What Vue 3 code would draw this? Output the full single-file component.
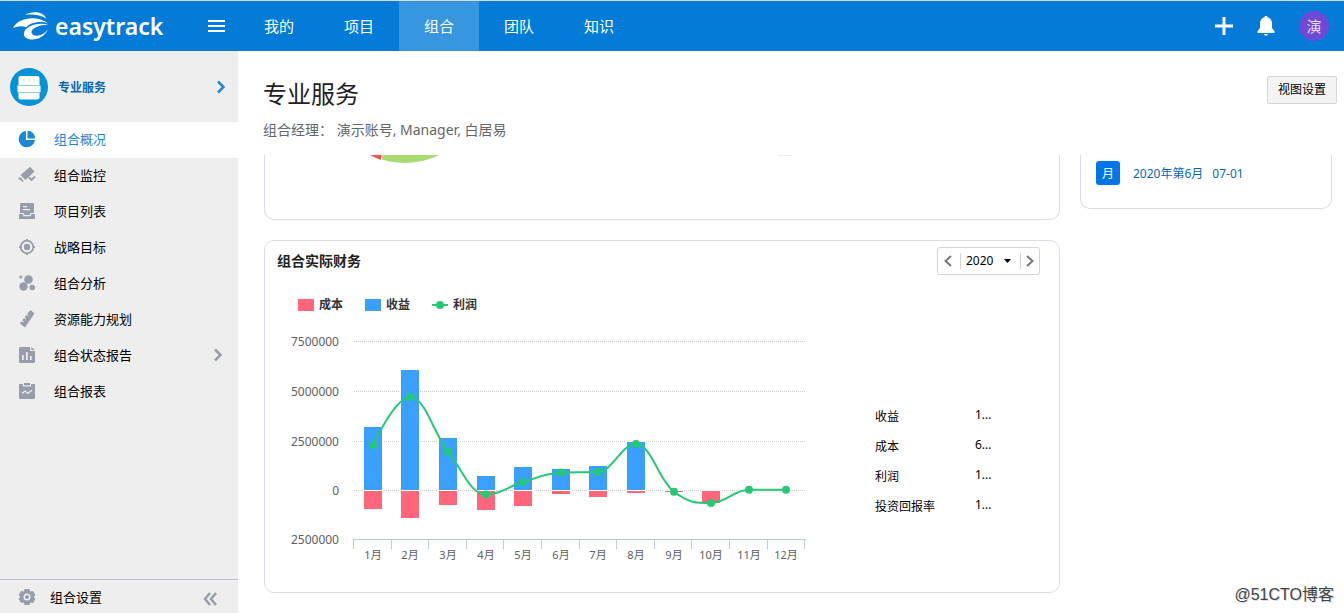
<script setup>
import { ref } from 'vue'

const tabs = ['我的', '项目', '组合', '团队', '知识']
const activeTab = ref('组合')

const menu = [
  { label: '组合概况', icon: 'pie' },
  { label: '组合监控', icon: 'camera' },
  { label: '项目列表', icon: 'inbox' },
  { label: '战略目标', icon: 'target' },
  { label: '组合分析', icon: 'bubbles' },
  { label: '资源能力规划', icon: 'ruler' },
  { label: '组合状态报告', icon: 'report', more: true },
  { label: '组合报表', icon: 'clipboard' },
]
const activeMenu = ref('组合概况')
const year = ref('2020')

const summary = [
  { name: '收益', value: '1...' },
  { name: '成本', value: '6...' },
  { name: '利润', value: '1...' },
  { name: '投资回报率', value: '1...' },
]

// Monthly amounts in units of 10,000
const income = [318, 606, 263, 71, 116, 106, 121, 242, 0, 0, 0, 0]
const cost = [91, 136, 71, 96, 76, 15, 30, 10, 5, 61, 0, 0]
const profit = [227, 470, 194, -23, 40, 88, 91, 232, -9, -66, 1, 1]

const left = 74
const step = 37.6
const zero = 160
const scale = 0.198
const centers = income.map((_, i) => Math.round(left + step * (i + 0.5)))
const ticks = Array.from({ length: 13 }, (_, i) => Math.floor(left - 0.5 + step * i) + 0.5)
const grid = [
  { y: 11, label: '7500000' },
  { y: 61, label: '5000000' },
  { y: 111, label: '2500000' },
  { y: 160, label: '0' },
  { y: 209, label: '2500000' },
]
const points = profit.map((v, i) => ({ x: centers[i], y: zero - v * scale }))

function spline(pts) {
  let d = `M${pts[0].x} ${pts[0].y}`
  let prevX = pts[0].x
  let prevY = pts[0].y
  for (let i = 1; i < pts.length; i++) {
    const p = pts[i]
    let lx = p.x
    let ly = p.y
    let rx = p.x
    let ry = p.y
    if (i < pts.length - 1) {
      const a = pts[i - 1]
      const b = pts[i + 1]
      lx = (1.5 * p.x + a.x) / 2.5
      ly = (1.5 * p.y + a.y) / 2.5
      rx = (1.5 * p.x + b.x) / 2.5
      ry = (1.5 * p.y + b.y) / 2.5
      const fix = ((ry - ly) * (rx - p.x)) / (rx - lx) + p.y - ry
      ly += fix
      ry += fix
      if (ly > Math.max(a.y, p.y)) {
        ly = Math.max(a.y, p.y)
        ry = 2 * p.y - ly
      } else if (ly < Math.min(a.y, p.y)) {
        ly = Math.min(a.y, p.y)
        ry = 2 * p.y - ly
      }
      if (ry > Math.max(b.y, p.y)) {
        ry = Math.max(b.y, p.y)
        ly = 2 * p.y - ry
      } else if (ry < Math.min(b.y, p.y)) {
        ry = Math.min(b.y, p.y)
        ly = 2 * p.y - ry
      }
    }
    d += ` C${prevX} ${prevY} ${lx} ${ly} ${p.x} ${p.y}`
    prevX = rx
    prevY = ry
  }
  return d
}
const profitPath = spline(points)
</script>

<template>
  <div class="app">
    <header class="topbar">
      <a class="logo" href="#" aria-label="easytrack">
        <svg viewBox="36 32 116 92" width="38" height="30" fill="#fff">
          <path d="M76 44C94 31 132 32 141 55C124 44 100 41 76 44Z" />
          <path d="M39 84C56 50 112 44 148 70C116 60 90 70 79 82C66 76 54 79 39 84Z" />
          <path d="M147 74C112 64 73 80 72 103C74 126 128 128 146 89C132 108 104 114 96 100C92 86 118 74 147 74Z" />
        </svg>
        <span>easytrack</span>
      </a>
      <button class="burger" aria-label="菜单"><i></i><i></i><i></i></button>
      <nav class="tabs">
        <a v-for="t in tabs" :key="t" href="#" :class="{ on: t === activeTab }" @click.prevent="activeTab = t">{{ t }}</a>
      </nav>
      <div class="tools">
        <button aria-label="新建">
          <svg width="18" height="18" viewBox="0 0 18 18" fill="#fff"><path d="M7.500 0h3v7.500H18v3h-7.500V18h-3v-7.500H0v-3h7.500z" /></svg>
        </button>
        <button aria-label="通知">
          <svg width="18" height="20" viewBox="0 0 18 20" fill="#fff"><path d="M9 0c1 0 1.500.6 1.500 1.300C13.500 2 15 4.500 15 7.500V12l2.500 3.200V17H.5v-1.800L3 12V7.500C3 4.500 4.500 2 7.500 1.300 7.500.6 8 0 9 0zM6.500 18h5L9 20z" /></svg>
        </button>
        <button class="avatar">演</button>
      </div>
    </header>

    <div class="body">
      <aside class="side">
        <a class="portfolio" href="#">
          <svg width="38" height="38" viewBox="0 0 38 38">
            <circle cx="19" cy="19" r="19" fill="#0492d8" />
            <rect x="8.500" y="8" width="21" height="23.500" rx="2" fill="#fff" />
            <rect x="7.500" y="17.500" width="23" height="7" rx="1" fill="#fff" stroke="#8fd0f0" />
            <path d="M13 12h2.500M18 12h2.500M23 12h2.500" stroke="#d5eefa" stroke-width="1.500" />
          </svg>
          <b>专业服务</b>
          <svg width="10" height="14" viewBox="0 0 10 14" fill="none" stroke="#2487d8" stroke-width="2.500"><path d="M2 1.500L7.500 7L2 12.500" /></svg>
        </a>
        <nav class="menu">
          <a v-for="m in menu" :key="m.label" href="#" :class="{ on: m.label === activeMenu }" @click.prevent="activeMenu = m.label">
            <svg width="18" height="18" viewBox="0 0 18 18" fill="currentColor">
              <template v-if="m.icon === 'pie'">
                <path d="M8 1A8.200 8.200 0 1 0 17 10H8z" />
                <path d="M9.500.8V8.500H17.300A8 8 0 0 0 9.500.8z" />
              </template>
              <template v-else-if="m.icon === 'camera'">
                <path d="M2.500 9L12 .8 16.500 5.500 7.500 14z" />
                <path d="M.5 12.500h2L5 15.500M11 11.500l2.500 2.500L17 10.500" fill="none" stroke="currentColor" stroke-width="1.800" />
              </template>
              <template v-else-if="m.icon === 'inbox'">
                <path fill-rule="evenodd" d="M3 1h12q1 0 1 1v9h-3.500l-1 2h-5l-1-2H2V2q0-1 1-1zM5 4v1.300h4V4zm0 3v1.300h7V7z" />
                <path d="M1 12h3.500l1 2.300h7l1-2.300H17v5H1z" />
              </template>
              <template v-else-if="m.icon === 'target'">
                <circle cx="9" cy="9" r="6.300" fill="none" stroke="currentColor" stroke-width="1.800" />
                <circle cx="9" cy="9" r="3.200" />
                <path d="M8 1h2v2H8zM8 15h2v2H8zM1 8h2v2H1zM15 8h2v2h-2z" />
              </template>
              <template v-else-if="m.icon === 'bubbles'">
                <circle cx="10.500" cy="5.500" r="4.300" />
                <circle cx="5.500" cy="12.500" r="4.200" />
                <circle cx="14.300" cy="13.500" r="2.800" />
                <circle cx="2.800" cy="3" r="1.500" />
              </template>
              <template v-else-if="m.icon === 'ruler'">
                <path d="M12.500 0l4 3.500L7 17.500 2 13.500l1.500-2.200 1.500 1 .8-1-1.500-1L5.800 8.200l1.600 1 .8-1-1.600-1 1.600-2.200 1.500 1 .8-1-1.500-1z" />
              </template>
              <template v-else-if="m.icon === 'report'">
                <path fill-rule="evenodd" d="M2 1h10v4h5v11q0 1-1 1H2q-1 0-1-1V2q0-1 1-1zm2 8v5h1.700V9zm4-3v8h1.700V6zm4 4v4h1.700v-4z" />
                <path d="M13.200 1l3.800 3h-3.800z" />
              </template>
              <template v-else>
                <path d="M1 2h4v2.500h8V2h4v14q0 1-1 1H2q-1 0-1-1z" />
                <path d="M6 1h6v2.300H6z" />
                <path d="M4 11.500l3-2.500 3 2.500L14 8" fill="none" stroke="#eee" stroke-width="1.300" />
              </template>
            </svg>
            <span>{{ m.label }}</span>
            <svg v-if="m.more" width="10" height="14" viewBox="0 0 10 14" fill="none" stroke="currentColor" stroke-width="2.500"><path d="M2 1.500L7.500 7L2 12.500" /></svg>
          </a>
        </nav>
        <div class="foot">
          <a href="#">
            <svg width="18" height="18" viewBox="0 0 18 18" fill="currentColor">
              <path fill-rule="evenodd" d="M6.500 1h5l.7 2.500L15 3l2.300 4-1.500 2 1.500 2-2.300 4-2.800-.5-.7 2.500h-5l-.7-2.500L3 15 .7 11l1.500-2L.7 7 3 3l2.800.5zM9 5.500a3.500 3.500 0 1 0 0 7 3.500 3.500 0 0 0 0-7z" />
              <circle cx="9" cy="9" r="2" />
            </svg>
            <span>组合设置</span>
          </a>
          <button aria-label="收起">
            <svg width="14" height="14" viewBox="0 0 14 14" fill="none" stroke="#979da9" stroke-width="2.500"><path d="M7 1L2 7L7 13M13 1L8 7L13 13" /></svg>
          </button>
        </div>
      </aside>

      <main class="main">
        <div class="head">
          <div>
            <h1>专业服务</h1>
            <p>组合经理： 演示账号, Manager, 白居易</p>
          </div>
          <button class="view">视图设置</button>
        </div>

        <div class="content">
          <div class="col">
            <section class="card cut pie">
              <svg width="530" height="10" viewBox="0 0 530 10">
                <circle cx="140" cy="-68" r="76" fill="#a7dc70" />
                <path d="M105 0H118L116.500 5Q110 3 105 0z" fill="#fb4f57" />
                <path d="M117.500 -1L116 6" stroke="#fff" />
                <path d="M513 .5h14" stroke="#ececf2" />
              </svg>
            </section>

            <section class="card finance">
              <div class="cardhead">
                <h2>组合实际财务</h2>
                <div class="year">
                  <button class="prev" aria-label="上一年"><svg width="8" height="12" viewBox="0 0 8 12"><path d="M7 1L1.500 6L7 11" /></svg></button>
                  <div class="pick">
                    <select v-model="year" aria-label="年份"><option>2020</option><option>2019</option></select>
                    <svg width="7" height="4" viewBox="0 0 7 4"><path class="solid" d="M0 0h7L3.500 4z" /></svg>
                  </div>
                  <button class="next" aria-label="下一年"><svg width="8" height="12" viewBox="0 0 8 12"><path d="M1 1L6.500 6L1 11" /></svg></button>
                </div>
              </div>
              <div class="legend">
                <span><i class="red"></i>成本</span>
                <span><i class="blue"></i>收益</span>
                <span><svg width="16" height="8" viewBox="0 0 16 8"><path d="M0 4h16" stroke="#25c975" stroke-width="2" /><circle cx="8" cy="4" r="4" fill="#25c975" /></svg>利润</span>
              </div>
              <div class="plotrow">
                <svg class="plot" width="540" height="240" viewBox="0 0 540 240">
                  <g class="ylab"><text v-for="(g, i) in grid" :key="i" x="59" :y="g.y + 5">{{ g.label }}</text></g>
                  <path v-for="g in grid.slice(0, 4)" :key="g.y" :d="`M${left} ${g.y + 0.5}H526`" stroke="#ccc" stroke-dasharray="1 1" />
                  <g stroke="#fff" shape-rendering="crispEdges">
                    <template v-for="(c, i) in centers" :key="i">
                      <rect v-if="income[i]" :x="c - 9.5" :y="zero - Math.round(income[i] * scale) - 0.5" width="19" :height="Math.round(income[i] * scale) + 1" fill="#3aa0ff" />
                      <rect v-if="cost[i]" :x="c - 9.5" :y="zero + 0.5" width="19" :height="Math.round(cost[i] * scale) + 1" fill="#ff667c" />
                    </template>
                  </g>
                  <path :d="`M73 209.5H526` + ticks.map(t => `M${t} 209V219`).join('')" stroke="#c0cbdc" fill="none" />
                  <path :d="profitPath" fill="none" stroke="#25c975" stroke-width="2" />
                  <circle v-for="p in points" :key="p.x" :cx="p.x" :cy="p.y" r="4" fill="#25c975" />
                  <g class="xlab"><text v-for="(c, i) in centers" :key="i" :x="c" y="229">{{ i + 1 }}月</text></g>
                </svg>
                <dl class="sum">
                  <div v-for="s in summary" :key="s.name"><dt>{{ s.name }}</dt><dd>{{ s.value }}</dd></div>
                </dl>
              </div>
            </section>
          </div>

          <section class="card cut report">
            <i>月</i>
            <a href="#">2020年第6月</a>
            <a href="#">07-01</a>
          </section>
        </div>
      </main>
    </div>
    <div class="mark">@51CTO博客</div>
  </div>
</template>

<style>
body {
  margin: 0;
}
</style>

<style scoped>
* {
  box-sizing: border-box;
}
.app {
  position: relative;
  display: flex;
  flex-direction: column;
  height: 100vh;
  overflow: hidden;
  background: #fff;
  color: #000;
  font: 13px/20px "Noto Sans", "Noto Sans CJK SC", sans-serif;
}
a {
  color: inherit;
  text-decoration: none;
}
button {
  display: flex;
  align-items: center;
  justify-content: center;
  padding: 0;
  border: 0;
  background: none;
  color: inherit;
  font: inherit;
  cursor: pointer;
}
svg {
  display: block;
  flex: none;
}
.topbar {
  display: flex;
  flex: none;
  height: 51px;
  border-top: 1px solid #cfdde6;
  background: #037bd7;
  color: #fff;
}
.logo {
  display: flex;
  align-items: center;
  gap: 5px;
  width: 208px;
  padding-left: 12px;
}
.logo span {
  font: 600 23px/32px "Noto Sans", sans-serif;
}
.burger {
  flex-direction: column;
  gap: 3px;
  width: 17px;
}
.burger i {
  width: 17px;
  height: 2px;
  background: #fff;
}
.tabs {
  display: flex;
  margin-left: 14px;
}
.tabs a {
  width: 80px;
  font-size: 15px;
  line-height: 50px;
  text-align: center;
}
.tabs .on {
  background: #3896df;
}
.tools {
  display: flex;
  align-items: center;
  gap: 24px;
  margin-left: auto;
  padding-right: 15px;
}
.avatar {
  width: 30px;
  height: 30px;
  border-radius: 50%;
  background: #6e49d8;
  color: #e6ddf8;
  font-size: 15px;
}
.body {
  display: flex;
  flex: 1;
  min-height: 0;
}
.side {
  display: flex;
  flex: none;
  flex-direction: column;
  width: 238px;
  background: #eee;
}
.portfolio {
  display: flex;
  align-items: center;
  gap: 10px;
  height: 71px;
  padding: 0 12px 0 10px;
  color: #0868b5;
  font-size: 12px;
}
.portfolio b {
  flex: 1;
  line-height: 18px;
  padding-top: 2px;
}
.menu {
  flex: 1;
}
.menu a {
  display: flex;
  align-items: center;
  gap: 18px;
  height: 36px;
  padding: 0 15px 2px 18px;
  color: #979da9;
}
.menu span {
  flex: 1;
  color: #000;
}
.menu .on,
.menu .on span {
  background: #fff;
  color: #1b87d6;
}
.foot {
  display: flex;
  justify-content: space-between;
  height: 34px;
  padding: 0 21px 0 18px;
  border-top: 1px solid #b9c1ce;
}
.foot button {
  padding-top: 4px;
}
.foot a {
  display: flex;
  align-items: center;
  gap: 14px;
  color: #979da9;
}
.foot span {
  color: #000;
}
.main {
  display: flex;
  flex: 1;
  flex-direction: column;
  min-width: 0;
}
.head {
  display: flex;
  flex: none;
  align-items: flex-start;
  justify-content: space-between;
  height: 104px;
  padding: 25px 7px 0 25px;
}
h1 {
  margin: 0;
  color: #222;
  font-size: 24px;
  font-weight: 400;
  line-height: 36px;
}
.head p {
  margin: 8px 0 0;
  color: #666;
  font-size: 14px;
}
.view {
  width: 70px;
  height: 28px;
  border: 1px solid #d5d5d5;
  border-radius: 2px;
  background: #f3f3f3;
  font-size: 12px;
}
.content {
  display: flex;
  flex: 1;
  gap: 20px;
  align-items: flex-start;
  min-height: 0;
  padding: 0 12px 0 26px;
  overflow: hidden;
}
.col {
  display: flex;
  flex: 1;
  flex-direction: column;
  gap: 20px;
}
.card {
  border: 1px solid #dadce8;
  border-radius: 10px;
}
.cut {
  border-top: 0;
  border-radius: 0 0 10px 10px;
}
.pie {
  height: 65px;
}
.finance {
  padding-bottom: 22px;
}
.cardhead {
  display: flex;
  align-items: center;
  justify-content: space-between;
  padding: 6px 19px 0 12px;
}
h2 {
  margin: 0;
  color: #222;
  font-size: 14px;
  font-weight: 700;
  line-height: 28px;
}
.year {
  display: flex;
  align-items: center;
  height: 28px;
  border: 1px solid #d5d5d5;
  border-radius: 3px;
}
.year button {
  height: 26px;
}
.prev {
  width: 22px;
  padding-right: 3px;
}
.next {
  width: 18px;
}
.year path {
  fill: none;
  stroke: #777;
  stroke-width: 2;
}
.pick {
  position: relative;
  display: flex;
  border: 1px solid #d5d5d5;
  border-width: 0 1px;
}
.pick select {
  width: 59px;
  height: 16px;
  padding: 0 0 0 5px;
  border: 0;
  background: none;
  appearance: none;
  font: 12px/16px "Noto Sans", sans-serif;
}
.pick svg {
  position: absolute;
  top: 6px;
  right: 9px;
  pointer-events: none;
}
.year .solid {
  fill: #000;
  stroke: none;
}
.legend {
  display: flex;
  gap: 22px;
  padding: 20px 0 0 33px;
  color: #333;
  font-size: 12px;
  font-weight: 700;
}
.legend span {
  display: flex;
  align-items: center;
  gap: 5px;
}
.legend i {
  width: 16px;
  height: 12px;
}
.red {
  background: #ff667c;
}
.blue {
  background: #3aa0ff;
}
.plotrow {
  display: flex;
  padding: 15px 0 0 15px;
}
.plot {
  overflow: visible;
}
.plot text {
  fill: #606060;
  font-size: 12px;
}
.ylab {
  text-anchor: end;
}
.xlab {
  text-anchor: middle;
}
.plot .xlab text {
  font-size: 11px;
}
.sum {
  margin: 70px 0 0 55px;
  font-size: 12px;
}
.sum div {
  display: flex;
  height: 30px;
}
.sum dt {
  width: 100px;
  line-height: 34px;
}
.sum dd {
  margin: 0;
  line-height: 30px;
}
.report {
  display: flex;
  gap: 9px;
  width: 252px;
  height: 54px;
  padding: 6px 15px 0;
  color: #0868b5;
  font-size: 12px;
  line-height: 26px;
}
.report i {
  width: 24px;
  height: 24px;
  margin-right: 4px;
  border-radius: 3px;
  background: #0076e8;
  color: #fff;
  font-style: normal;
  text-align: center;
}
.mark {
  position: absolute;
  right: 10px;
  bottom: 8px;
  color: #444;
  font: 16px/20px "Liberation Sans", "Noto Sans CJK SC", sans-serif;
  text-shadow: 1px 1px 0 #ddd;
}
</style>
